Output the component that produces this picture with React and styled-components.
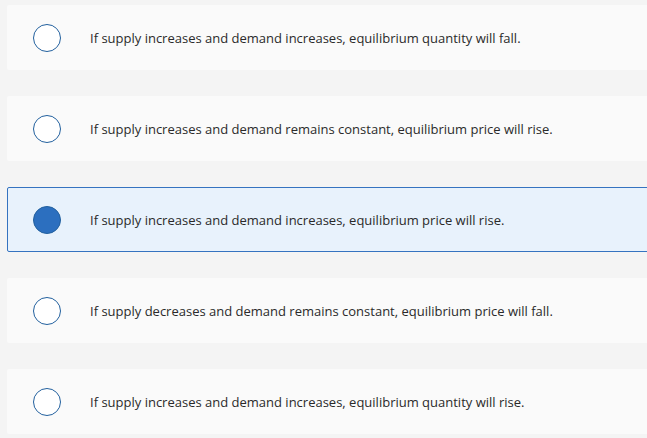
import React from "react";
import styled, { createGlobalStyle } from "styled-components";

const Global = createGlobalStyle`
  html, body { margin: 0; padding: 0; background: #f4f4f4; }
  body { font-family: "Open Sans", Lato, sans-serif; }
`;

const Page = styled.div`
  width: 100vw;
  height: 100vh;
  overflow: hidden;
`;

const List = styled.div`
  display: flex;
  flex-direction: column;
  gap: 26px;
  padding: 5px 0 0 7px;
  margin-right: -60px;
`;

const Option = styled.label`
  display: flex;
  align-items: center;
  box-sizing: border-box;
  height: 65px;
  padding-left: 25px;
  background: ${p => (p.$selected ? "#e8f2fc" : "#fafafa")};
  border: 1px solid ${p => (p.$selected ? "#3573c0" : "transparent")};
  border-radius: 2px;
  cursor: pointer;
`;

const Radio = styled.span`
  box-sizing: border-box;
  width: 28px;
  height: 28px;
  border-radius: 50%;
  border: 1.5px solid #22609e;
  background: ${p => (p.$selected ? "#2c6fbf" : "#fff")};
  flex: none;
`;

const Text = styled.span`
  margin-left: 29px;
  font-size: 13px;
  color: #2a2a2a;
  white-space: nowrap;
`;

const options = [
  "If supply increases and demand increases, equilibrium quantity will fall.",
  "If supply increases and demand remains constant, equilibrium price will rise.",
  "If supply increases and demand increases, equilibrium price will rise.",
  "If supply decreases and demand remains constant, equilibrium price will fall.",
  "If supply increases and demand increases, equilibrium quantity will rise.",
];

export default function App() {
  const selected = 2;
  return (
    <Page>
      <Global />
      <List>
        {options.map((t, i) => (
          <Option key={i} $selected={i === selected}>
            <Radio $selected={i === selected} />
            <Text>{t}</Text>
          </Option>
        ))}
      </List>
    </Page>
  );
}
